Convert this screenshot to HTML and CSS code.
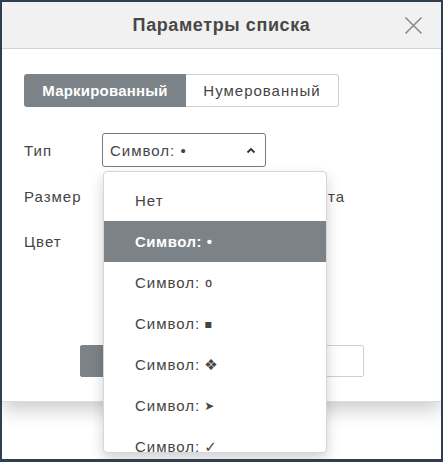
FILE: index.html
```html
<!DOCTYPE html>
<html lang="ru">
<head>
<meta charset="utf-8">
<title>Параметры списка</title>
<link rel="stylesheet" href="styles.css">
</head>
<body>
<div class="frame">
  <div class="dialog">
    <div class="header">
      <span></span>
      <span class="title">Параметры списка</span>
      <svg class="close" width="19" height="19" viewBox="0 0 19 19"><path d="M1.5 1.5 L17.5 17.5 M17.5 1.5 L1.5 17.5" stroke="#8a8a8a" stroke-width="1.6" fill="none"/></svg>
    </div>
    <div class="body">
      <div class="seg">
        <div class="seg-btn active">Маркированный</div>
        <div class="seg-btn">Нумерованный</div>
      </div>
      <div class="row row-first">
        <span class="label">Тип</span>
        <div class="select">
          <span>Символ: •</span>
          <svg width="10" height="7" viewBox="0 0 10 7"><path d="M1.5 5.5 L5 2 L8.5 5.5" stroke="#333" stroke-width="1.8" fill="none"/></svg>
        </div>
      </div>
      <div class="row">
        <span class="label">Размер</span>
        <div class="field">
          <div class="input"></div>
          <span class="suffix">% текста</span>
        </div>
      </div>
      <div class="row">
        <span class="label">Цвет</span>
        <div class="input small"></div>
      </div>
      <div class="buttons">
        <div class="btn primary" aria-label="ОК"></div>
        <div class="btn" aria-label="Отмена"></div>
      </div>
    </div>
  </div>
  <ul class="menu">
    <li>Нет</li>
    <li class="selected">Символ: •</li>
    <li>Символ: <span class="sym-o">o</span></li>
    <li>Символ: <span class="sym sq">▪</span></li>
    <li>Символ: <span class="sym">❖</span></li>
    <li>Символ: <span class="sym arrow">➤</span></li>
    <li>Символ: <span class="sym">✓</span></li>
  </ul>
</div>
</body>
</html>
```

FILE: styles.css
```css
html, body {
  margin: 0;
  padding: 0;
}
body {
  background: #2f3e51;
  font-family: "Liberation Sans", Arial, sans-serif;
  color: #444;
}
.frame {
  position: relative;
  width: 439px;
  height: 457px;
  margin: 2px 2px 3px 2px;
  background: #fff;
  overflow: hidden;
}
.dialog {
  height: 399px;
  background: #fff;
  border-bottom: 1px solid #dcdcdc;
  box-shadow: 0 8px 18px rgba(0, 0, 0, 0.2);
}
.header {
  height: 46px;
  background: #f1f1f1;
  border-bottom: 1px solid #d3d3d3;
  display: grid;
  grid-template-columns: 1fr auto 1fr;
  align-items: center;
}
.title {
  font-size: 18px;
  font-weight: bold;
  letter-spacing: 0.6px;
  color: #474747;
}
.close {
  justify-self: end;
  margin-right: 18px;
}
.body {
  padding: 25px 0 0 22px;
  display: flex;
  flex-direction: column;
}
.seg {
  display: flex;
  height: 33px;
}
.seg-btn {
  display: flex;
  align-items: center;
  justify-content: center;
  font-size: 15px;
  letter-spacing: 1px;
  box-sizing: border-box;
  height: 33px;
}
.seg-btn.active {
  width: 162px;
  background: #7b8288;
  color: #fff;
  font-weight: bold;
  letter-spacing: 0.2px;
  border-radius: 3px 0 0 3px;
}
.seg-btn:not(.active) {
  width: 153px;
  border: 1px solid #d0d0d0;
  border-left: none;
  border-radius: 0 3px 3px 0;
  color: #444;
}
.row {
  display: flex;
  align-items: center;
  height: 34px;
  margin-top: 12px;
  font-size: 15px;
  letter-spacing: 1px;
}
.row-first {
  margin-top: 26px;
}
.row + .row + .row {
  margin-top: 11px;
}
.label {
  width: 78px;
}
.select {
  box-sizing: border-box;
  width: 164px;
  height: 34px;
  border: 1px solid #7a7a7a;
  border-radius: 3px;
  display: flex;
  align-items: center;
  justify-content: space-between;
  padding: 0 9px 0 7px;
  color: #444;
}
.field {
  width: 242px;
  display: flex;
  align-items: center;
  justify-content: space-between;
}
.input {
  box-sizing: border-box;
  width: 150px;
  height: 30px;
  margin-left: 8px;
  border: 1px solid #cfcfcf;
}
.input.small {
  width: 60px;
}
.suffix {
  white-space: nowrap;
  margin-right: -1px;
}
.buttons {
  display: flex;
  justify-content: center;
  gap: 8px;
  margin-top: 87px;
  margin-left: -22px;
}
.btn {
  box-sizing: border-box;
  width: 138px;
  height: 32px;
  border: 1px solid #cfcfcf;
  border-radius: 2px;
}
.btn.primary {
  background: #7b8288;
  border-color: #7b8288;
}
.menu {
  position: absolute;
  left: 101px;
  top: 169px;
  width: 224px;
  height: 282px;
  box-sizing: border-box;
  margin: 0;
  padding: 8px 0 0;
  list-style: none;
  background: #fff;
  border: 1px solid #d6d6d6;
  border-radius: 4px;
  box-shadow: 0 6px 14px rgba(0, 0, 0, 0.18);
  overflow: hidden;
}
.menu li {
  height: 41px;
  display: flex;
  align-items: center;
  padding-left: 31px;
  font-size: 15px;
  letter-spacing: 1px;
  color: #444;
}
.menu li.selected {
  background: #7b8288;
  color: #fff;
  font-weight: bold;
  letter-spacing: 0.5px;
}
.sym {
  font-family: "DejaVu Sans", sans-serif;
  margin-left: 4px;
  font-size: 15px;
  letter-spacing: 0;
}
.sym.sq {
  font-size: 12px;
}
.sym.arrow {
  font-size: 12px;
}
.sym-o {
  font-family: "Liberation Sans", sans-serif;
  font-size: 12px;
  margin-left: 5px;
  -webkit-text-stroke: 0.3px #444;
}
```
